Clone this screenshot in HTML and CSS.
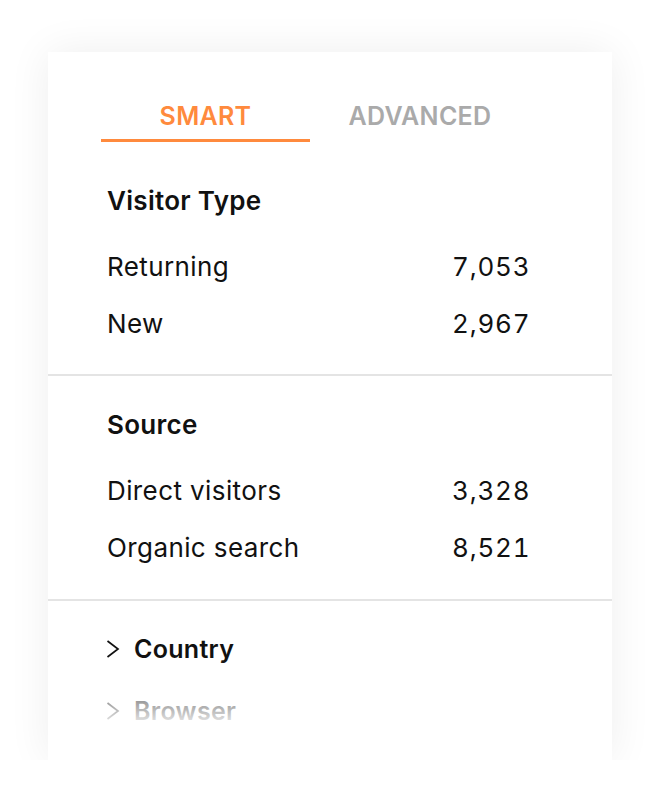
FILE: index.html
```html
<!DOCTYPE html>
<html lang="en">

<head>
    <meta charset="UTF-8">
    <meta name="viewport" content="width=device-width, initial-scale=1.0">
    <title>Visitor filters</title>
    <link rel="stylesheet" href="styles.css">
</head>

<body>
    <div class="card">
        <div class="tabs">
            <div class="tab active">SMART</div>
            <div class="tab">ADVANCED</div>
        </div>

        <div class="section">
            <div class="title">Visitor Type</div>
            <div class="row"><span>Returning</span><span class="num">7,053</span></div>
            <div class="row"><span>New</span><span class="num">2,967</span></div>
        </div>

        <div class="section">
            <div class="title">Source</div>
            <div class="row"><span>Direct visitors</span><span class="num">3,328</span></div>
            <div class="row"><span>Organic search</span><span class="num">8,521</span></div>
        </div>

        <div class="section collapsed">
            <div class="group">
                <svg width="14" height="18" viewBox="0 0 14 18"><path d="M1.5 1 L12 9 L1.5 17" fill="none" stroke="currentColor" stroke-width="1.7"/></svg>
                <span>Country</span>
            </div>
            <div class="group">
                <svg width="14" height="18" viewBox="0 0 14 18"><path d="M1.5 1 L12 9 L1.5 17" fill="none" stroke="currentColor" stroke-width="1.7"/></svg>
                <span>Browser</span>
            </div>
        </div>

        <div class="fade"></div>
    </div>
</body>

</html>
```

FILE: styles.css
```css
body {
    margin: 0;
    padding-top: 52px;
    background-color: #ffffff;
    color: #111111;
    font-family: Inter, "Noto Sans", sans-serif;
}

.card {
    position: relative;
    width: 564px;
    height: 708px;
    margin-left: 48px;
    background-color: #ffffff;
    box-shadow: 0 0 40px rgba(0, 0, 0, 0.07);
    overflow: hidden;
}

.tabs {
    display: flex;
    margin: 0 53px;
    padding-top: 50px;
}

.tab {
    width: 209px;
    padding-bottom: 8px;
    text-align: center;
    font-size: 25px;
    font-weight: 600;
    line-height: 29px;
    letter-spacing: 0.3px;
    color: #aaaaaa;
    border-bottom: 3px solid transparent;
}

.tab + .tab {
    width: 220px;
}

.tab.active {
    color: #ff8a3d;
    border-bottom-color: #ff8a3d;
}

.section {
    padding: 43px 0 22px 59px;
    border-bottom: 2px solid #e4e4e4;
}

.section + .section {
    padding-top: 33px;
    padding-bottom: 23px;
}

.title {
    font-size: 26px;
    font-weight: 600;
    line-height: 32px;
    letter-spacing: 0.3px;
    margin-bottom: 21px;
}

.row {
    display: grid;
    grid-template-columns: 345px auto;
    height: 57px;
    align-items: center;
    font-size: 26px;
    letter-spacing: 0.4px;
}

.num {
    font-feature-settings: "tnum";
    letter-spacing: 0.8px;
}

.section.collapsed {
    padding-top: 17px;
    border-bottom: none;
}

.group {
    display: flex;
    align-items: center;
    gap: 14px;
    height: 62px;
    font-size: 25px;
    font-weight: 600;
    letter-spacing: 0.3px;
}

.group svg {
    margin-left: -1px;
}

.fade {
    position: absolute;
    left: 0;
    right: 0;
    bottom: 0;
    height: 100px;
    background: linear-gradient(rgba(255, 255, 255, 0), rgba(255, 255, 255, 0.85) 60%, #ffffff);
}
```
